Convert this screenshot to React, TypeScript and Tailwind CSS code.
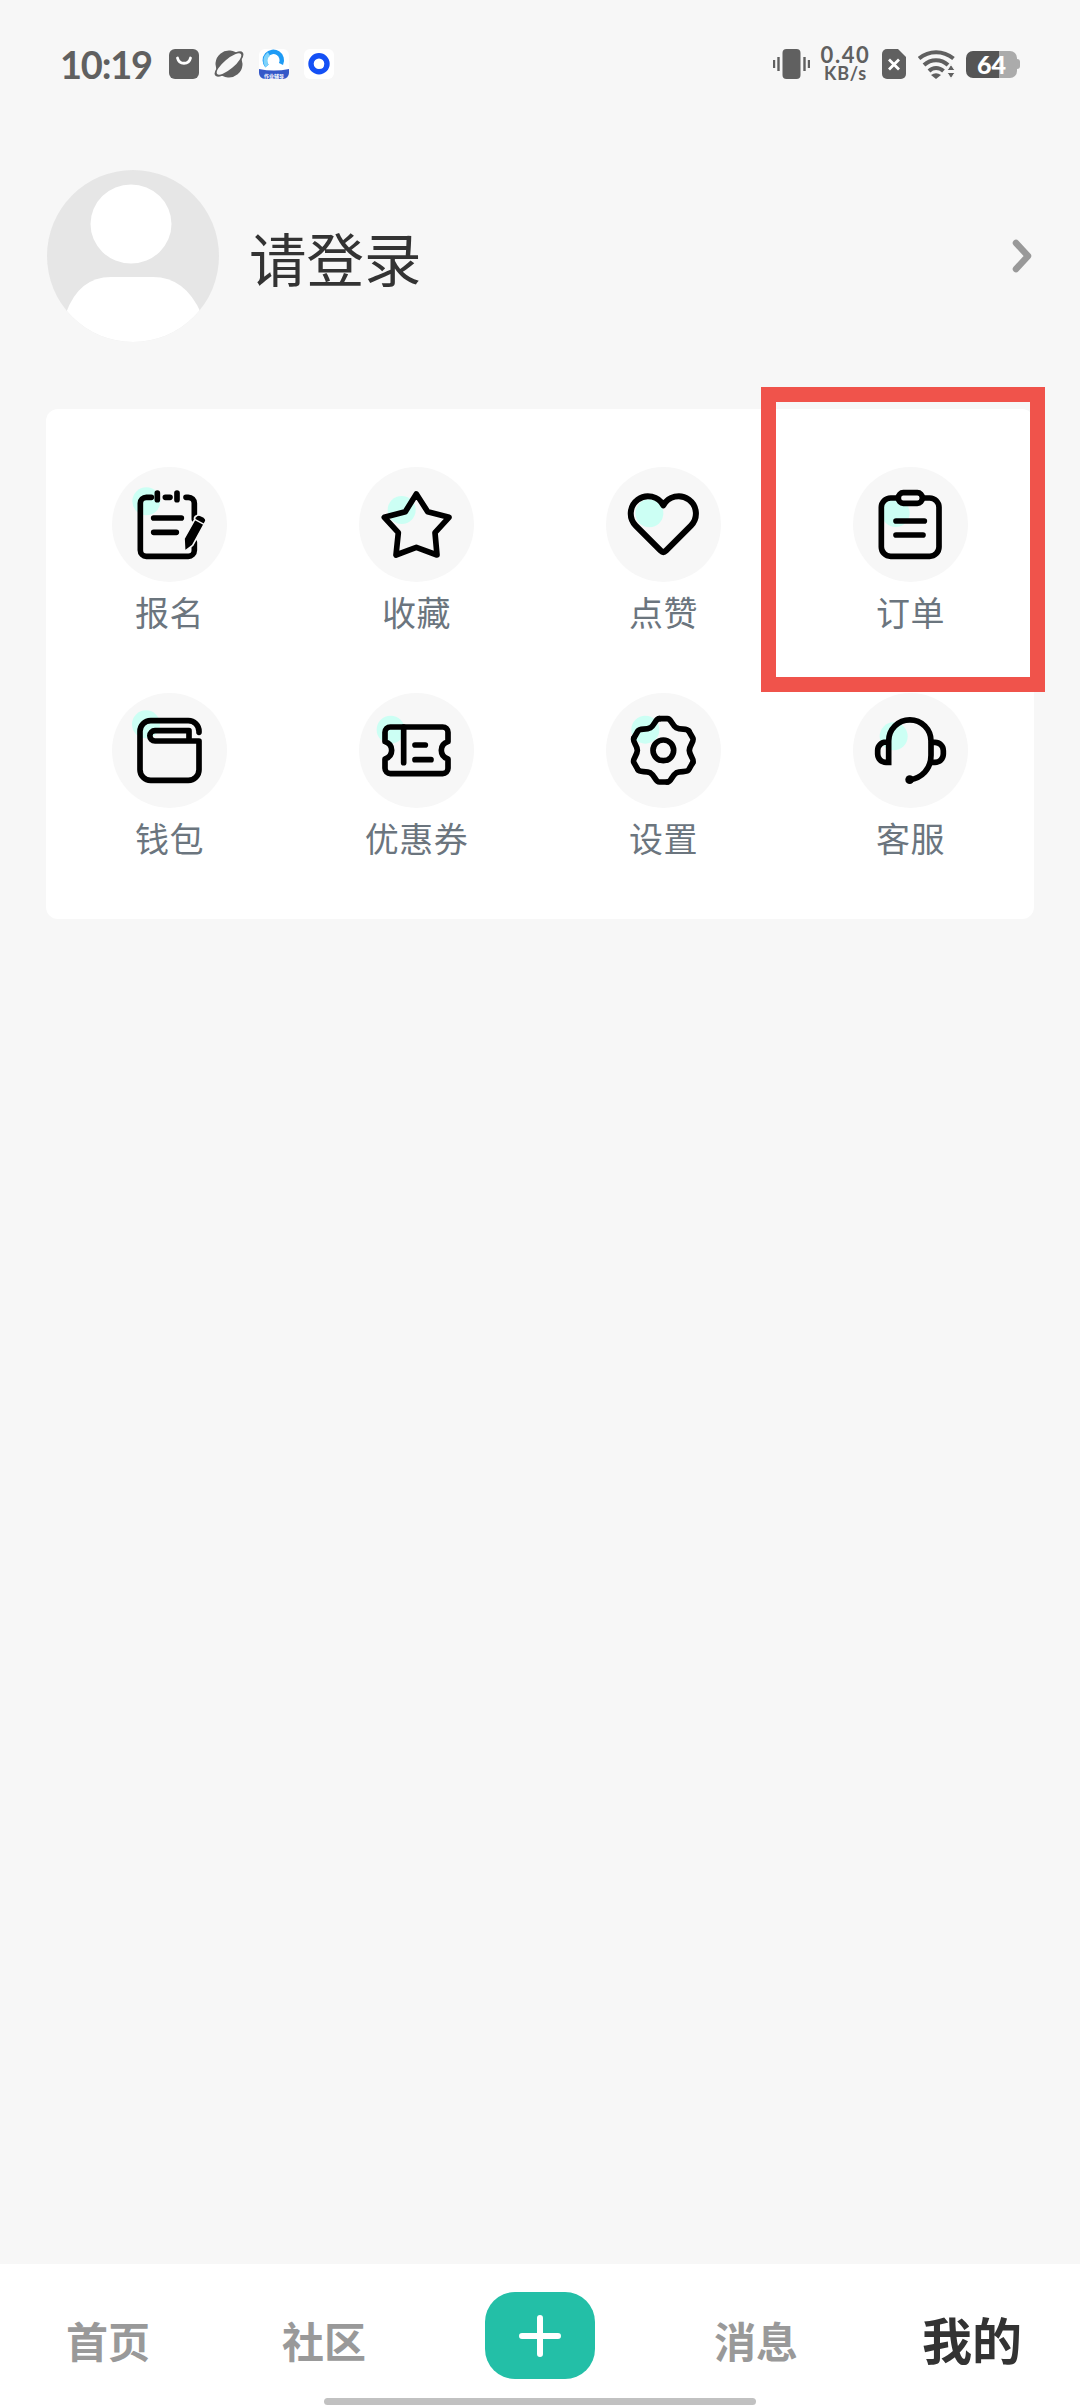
import { ReactNode } from "react";

type MenuItem = {
  label: string;
  // ミントの丸の位置
  dot: [number, number];
  icon: ReactNode;
};

const gearAngles = [0, 60, 120, 180, 240, 300];

const menus: MenuItem[] = [
  {
    label: "报名",
    dot: [103, 103],
    icon: (
      <>
        <path d="M118 91H103a18 18 0 0 0-18 18V250a18 18 0 0 0 18 18H229a18 18 0 0 0 18-18V226" />
        <path d="M222 91h7a18 18 0 0 1 18 18v48" />
        <path d="M160 91h14M136 78v20M195 78v20" />
        <path d="M125 153H208M125 196H193" />
        <path
          d="M216 215L248 158a10 10 0 0 1 6-12q6-4 14 0l8 4q7 5 6 12l-40 73-24 18z"
          stroke="#f7f7f7"
          strokeWidth="5"
          fill="black"
        />
        <path d="M248 157L276 172" stroke="#f7f7f7" strokeWidth="4" />
      </>
    ),
  },
  {
    label: "收藏",
    dot: [128, 129],
    icon: (
      <path d="M172 81L206 134L270 151L228 197L234 264L172 241L111 264L118 197L76 151L139 134Z" />
    ),
  },
  {
    label: "点赞",
    dot: [130, 139],
    icon: (
      <path
        d="M172 115A52 52 0 1 0 89 176L164 251Q172 259 180 251L255 176A52 52 0 1 0 172 115Z"
        strokeWidth="18"
      />
    ),
  },
  {
    label: "订单",
    dot: [128, 138],
    icon: (
      <>
        <rect x="85" y="93" width="173" height="175" rx="28" />
        <rect x="136" y="77" width="72" height="32" rx="15" fill="#f7f7f7" />
        <path d="M129 162H214M129 204H210" />
      </>
    ),
  },
  {
    label: "钱包",
    dot: [102, 94],
    icon: (
      <path d="M261 118v-3a32 32 0 0 0-32-32H116a32 32 0 0 0-32 32V230a32 32 0 0 0 32 32H229a32 32 0 0 0 32-32V144H129a15.500 15.500 0 0 1 0-31H231V144" />
    ),
  },
  {
    label: "优惠券",
    dot: [95, 110],
    icon: (
      <>
        <path d="M94 102H251a16 16 0 0 1 16 16V146c-13 4-20 14-20 26s7 22 20 26V226a16 16 0 0 1-16 16H94a16 16 0 0 1-16-16V198c13-4 20-14 20-26s-7-22-20-26V118a16 16 0 0 1 16-16z" />
        <path d="M134 102V209M168 156H199M168 200H216" />
      </>
    ),
  },
  {
    label: "设置",
    dot: [118, 110],
    icon: (
      <g transform="translate(172 172)">
        <circle r="31" />
        {gearAngles.map((angle) => (
          <path
            key={angle}
            d="M-12-95H12C24-95 25-76 39-67.500C53.300-59.600 70.300-68.300 76.300-57.900"
            transform={`rotate(${angle})`}
          />
        ))}
      </g>
    ),
  },
  {
    label: "客服",
    dot: [122, 130],
    icon: (
      <>
        <path
          d="M107 147H99a25 25 0 0 0-25 25v11a25 25 0 0 0 25 25H107V144A63.500 63.500 0 0 1 234 144V187C234 228 206 256 170 260"
          strokeLinejoin="miter"
        />
        <path d="M236 148h10a25 25 0 0 1 25 25v10a25 25 0 0 1-25 25h-12" />
        <circle cx="170" cy="260" r="13" fill="black" stroke="none" />
      </>
    ),
  },
];

const StatusBar = () => {
  return (
    <header className="flex h-[128px] justify-between pl-[60px] pr-[60px] pt-[44px] text-[#606060]">
      <div className="flex h-10 items-center">
        <span className="w-[109px] font-['Lato'] text-[38px] leading-[38px] font-bold tracking-[-1.2px]">
          10:19
        </span>
        <svg width="166" height="30" viewBox="0 0 166 30">
          <rect width="30" height="30" rx="6" fill="#606060" />
          <path
            d="M8.500 9c1.500 7 11.500 7 13 0"
            fill="none"
            stroke="white"
            strokeWidth="2.800"
            strokeLinecap="round"
          />
          <g transform="translate(60 15) rotate(-40)">
            <circle r="13.500" fill="#606060" />
            <ellipse rx="18" ry="6.500" fill="#606060" />
            <ellipse rx="15.500" ry="5" fill="#f7f7f7" />
          </g>
          <rect x="90" width="30" height="30" rx="6" fill="white" />
          <path
            d="M98 17A8.500 8.500 0 1 1 112 15"
            fill="none"
            stroke="#1e9bf5"
            strokeWidth="4.500"
          />
          <path d="M98 17A8.500 8.500 0 0 1 100 5" fill="none" stroke="#7ed3fb" strokeWidth="4" />
          <path d="M90 20q15 3 30 0v4a6 6 0 0 1-6 6H96a6 6 0 0 1-6-6z" fill="#3558c8" />
          <text
            x="105"
            y="28.500"
            textAnchor="middle"
            fill="white"
            fontSize="5"
            fontWeight="700"
            fontFamily="Noto Sans CJK SC, sans-serif"
          >
            作业辅导
          </text>
          <rect x="135" width="30" height="30" rx="6" fill="white" />
          <circle cx="150" cy="14.700" r="8" fill="none" stroke="#1450f5" strokeWidth="5.400" />
          <circle cx="152.500" cy="17.500" r="2" fill="white" />
        </svg>
      </div>
      <div className="flex h-10 items-center">
        <svg width="37" height="30" viewBox="0 0 37 30" fill="#606060">
          <rect x="9.500" width="18" height="30" rx="4" />
          <path
            d="M1 11v8M5.500 8v14M31.500 8v14M36 11v8"
            stroke="#606060"
            strokeWidth="2.400"
          />
        </svg>
        <div className="ml-[10px] flex w-[51px] flex-col items-center font-['Lato'] font-bold">
          <span className="text-[22px] leading-[19px] tracking-[1.6px]">0.40</span>
          <span className="text-[18px] leading-[19px] tracking-[0.8px]">KB/s</span>
        </div>
        <svg
          className="ml-[11px]"
          width="24"
          height="30"
          viewBox="0 0 24 30"
          fill="#606060"
        >
          <path d="M5 0H16l8 8V25a5 5 0 0 1-5 5H5a5 5 0 0 1-5-5V5a5 5 0 0 1 5-5z" />
          <path d="M7 10.500l10 10M17 10.500L7 20.500" stroke="white" strokeWidth="2.800" />
        </svg>
        <svg
          className="ml-[12px]"
          width="37"
          height="30"
          viewBox="0 0 37 30"
          fill="none"
          stroke="#606060"
          strokeWidth="4"
        >
          <path d="M1 9.500C11 1 25 1 35.500 9.500M6 16C13 9.500 23 9.500 30 16M11 22C15 18 21 18 25.500 22" />
          <path d="M13 26q5-3.500 10 0l-5 4z" fill="#606060" stroke="none" />
          <path
            d="M29 21.500l4-6 4 6zM29 23.500l4 6 4-6z"
            fill="#606060"
            stroke="#f7f7f7"
            strokeWidth="1"
          />
        </svg>
        <div className="ml-[11px] flex items-center">
          <div className="flex h-[27px] w-[51px] items-center justify-center rounded-[7px] bg-linear-to-r from-[#555] from-65% to-[#ababab] to-65% font-['Lato'] text-[25px] leading-[27px] font-black text-white">
            64
          </div>
          <div className="h-[10px] w-[3px] rounded-r-sm bg-[#ababab]" />
        </div>
      </div>
    </header>
  );
};

const Avatar = () => {
  return (
    <svg width="172" height="172" viewBox="0 0 172 172">
      <defs>
        <clipPath id="avatar">
          <circle cx="86" cy="86" r="86" />
        </clipPath>
      </defs>
      <g clipPath="url(#avatar)">
        <rect width="172" height="172" fill="#e6e6e6" />
        <ellipse cx="84" cy="54" rx="40.500" ry="39.500" fill="white" />
        <path d="M19 143Q32 107 64 107H106Q138 107 154 143V172H19z" fill="white" />
      </g>
    </svg>
  );
};

export default function App() {
  return (
    <div className="flex h-[2408px] w-[1080px] flex-col bg-[#f7f7f7] font-['Noto_Sans_CJK_SC',sans-serif]">
      <StatusBar />

      <section className="mt-[42px] flex h-[172px] items-center pr-[45px] pl-[47px]">
        <Avatar />
        <h1 className="ml-[30px] flex-1 pt-[2px] text-[57.5px] leading-[80px] text-[#333]">
          请登录
        </h1>
        <svg
          width="24"
          height="38"
          viewBox="0 0 24 38"
          fill="none"
          stroke="#999"
          strokeWidth="6.500"
          strokeLinecap="round"
          strokeLinejoin="round"
        >
          <path d="M5 6L17 19L5 32" />
        </svg>
      </section>

      <section className="relative mx-[46px] mt-[67px] h-[510px] rounded-xl bg-white pt-[58px]">
        <div className="grid grid-cols-4">
          {menus.map((menu) => (
            <div key={menu.label} className="flex h-[226px] flex-col items-center">
              <svg
                width="115"
                height="115"
                viewBox="0 0 345 345"
                fill="none"
                stroke="black"
                strokeWidth="17"
                strokeLinecap="round"
                strokeLinejoin="round"
              >
                <circle cx="172.500" cy="172.500" r="172.500" fill="#f7f7f7" stroke="none" />
                <circle cx={menu.dot[0]} cy={menu.dot[1]} r="42" fill="#ccfff4" stroke="none" />
                {menu.icon}
              </svg>
              <span className="mt-[5px] text-[34px] leading-[50px] tracking-[0.5px] text-[#6b757e]">
                {menu.label}
              </span>
            </div>
          ))}
        </div>
        {/* 订单を囲む赤枠 */}
        <div className="absolute top-[-22px] left-[715px] h-[305px] w-[284px] border-[15px] border-[#f0534b]" />
      </section>

      <nav className="mt-auto flex h-[144px] flex-col bg-white">
        <div className="grid h-[134px] grid-cols-5 text-center text-[42px] leading-[60px] font-bold text-[#999]">
          <span className="mt-[46px]">首页</span>
          <span className="mt-[46px]">社区</span>
          <button className="mt-[28px] flex h-[87px] w-[110px] items-center justify-center justify-self-center rounded-[30px] bg-[#23bfa7]">
            <svg
              width="42"
              height="42"
              viewBox="0 0 42 42"
              stroke="white"
              strokeWidth="6"
              strokeLinecap="round"
            >
              <path d="M3 21H39M21 3V39" />
            </svg>
          </button>
          <span className="mt-[46px]">消息</span>
          <span className="mt-[44px] text-[50px] text-[#333]">我的</span>
        </div>
        <div className="h-[7px] w-[432px] self-center rounded-full bg-[#c1c1c1]" />
      </nav>
    </div>
  );
}
